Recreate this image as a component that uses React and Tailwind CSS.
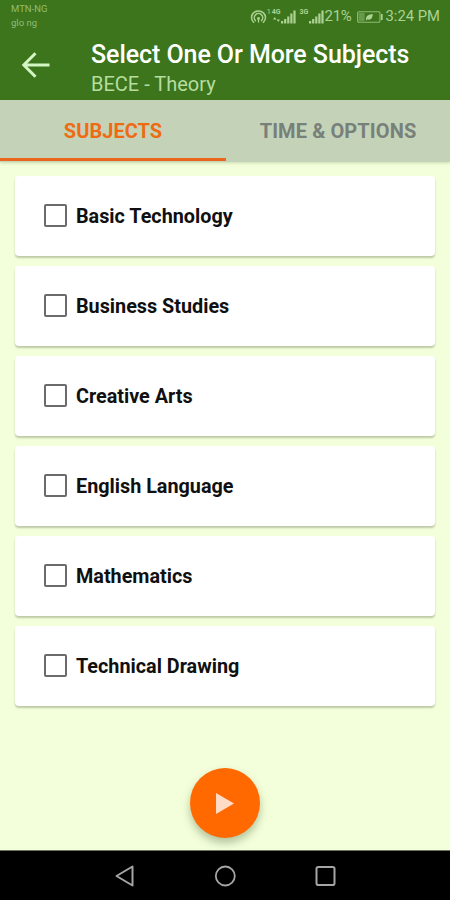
import React, { useState } from "react";

const subjects = [
  "Basic Technology",
  "Business Studies",
  "Creative Arts",
  "English Language",
  "Mathematics",
  "Technical Drawing",
];

const HotspotIcon = () => (
  <svg width="17" height="14" viewBox="0 0 17 14" fill="none" stroke="currentColor" strokeWidth="1.5" strokeLinecap="round">
    <path d="M3.6 12.2A7 6.6 0 1 1 13.4 12.2" />
    <path d="M5.4 10.6A4.2 4.2 0 1 1 11.6 10.6" />
    <circle cx="8.5" cy="8.5" r="1.4" fill="currentColor" stroke="none" />
    <path d="M8.5 9v3" strokeWidth="1.3" />
  </svg>
);

const SignalBars = () => (
  <svg width="15" height="14" viewBox="0 0 15 14" fill="currentColor">
    <rect x="0" y="11" width="2.2" height="2.5" />
    <rect x="3.1" y="9" width="2.2" height="4.5" />
    <rect x="6.2" y="6.5" width="2.2" height="7" />
    <rect x="9.3" y="3.5" width="2.2" height="10" />
    <rect x="12.4" y="0.5" width="2.2" height="13" />
  </svg>
);

const BatteryIcon = () => (
  <svg width="26" height="12" viewBox="0 0 26 12" fill="none">
    <rect x="0.6" y="0.8" width="22.4" height="10.4" rx="1.2" stroke="currentColor" strokeWidth="1.1" opacity="0.75" />
    <rect x="1.6" y="1.8" width="6" height="8.4" fill="currentColor" opacity="0.4" />
    <rect x="24" y="3" width="1.6" height="6" fill="currentColor" />
    <path d="M9 8.8C8.8 4.5 11.5 3.6 15.8 3C15.6 7.3 13.6 9.5 10.4 8.3L9.2 9.7Z" fill="currentColor" />
  </svg>
);

const App = () => {
  const [selected, setSelected] = useState([]);

  const toggle = (name) => {
    setSelected(selected.includes(name) ? selected.filter((s) => s !== name) : [...selected, name]);
  };

  return (
    <div className="w-[450px] h-[900px] flex flex-col overflow-hidden bg-[#f3ffda] font-['Roboto',sans-serif]">
      <header className="h-[100px] shrink-0 bg-[#3c751b] flex flex-col">
        <div className="h-[31px] flex justify-between text-[#abd293]">
          <div className="pl-[11px] pt-[2px] text-[9.5px] leading-[14px] text-[#91bd79]">
            <div>MTN-NG</div>
            <div>glo ng</div>
          </div>
          <div className="flex items-center pr-[10px] h-[33px]">
            <HotspotIcon />
            <span className="text-[8px] leading-none mb-[9px] w-[5px]">1</span>
            <div className="flex flex-col w-[9px] h-[15px] items-center text-[7px] leading-[7px] font-bold">
              <span>4G</span>
              <svg width="7" height="7" viewBox="0 0 7 7" fill="currentColor">
                <path d="M0 3.4L1.7 1L3.4 3.4ZM3.6 3.6H7L5.3 6Z" />
              </svg>
            </div>
            <SignalBars />
            <span className="text-[7px] leading-none font-bold mb-[9px] ml-[4px] w-[9px]">3G</span>
            <SignalBars />
            <span className="ml-[1px] text-[15px] w-[32px] tracking-[-0.3px]">21%</span>
            <BatteryIcon />
            <span className="ml-[3px] text-[14.8px] whitespace-nowrap">3:24 PM</span>
          </div>
        </div>
        <div className="flex">
          <button className="w-[91px] pl-[21px] pt-[1px] flex items-center text-[#d4f5c4]">
            <svg width="30" height="28" viewBox="0 0 30 28" fill="none" stroke="currentColor" strokeWidth="3">
              <path d="M28.5 14H3M14.5 2.2L2.8 14L14.5 25.8" />
            </svg>
          </button>
          <div className="pt-[7px]">
            <h1 className="text-[25px] leading-[33px] font-medium text-white whitespace-nowrap tracking-[-0.07px]">Select One Or More Subjects</h1>
            <p className="text-[20px] leading-[27px] text-[#b5dda0]">BECE - Theory</p>
          </div>
        </div>
      </header>

      <nav className="h-[62px] shrink-0 flex bg-[#c4d3b8] text-[20px] font-bold shadow-[0_1px_3px_rgba(80,100,50,0.25)]">
        <button className="w-[226px] border-b-[3px] border-[#eb661b] mb-px pt-[4px] text-[#ee6b13] tracking-[0.05px]">SUBJECTS</button>
        <button className="w-[224px] text-[#78807a] tracking-[0.1px]">TIME &amp; OPTIONS</button>
      </nav>

      <main className="flex-1 flex flex-col items-center px-[15px] pt-[14px]">
        <ul className="w-full flex flex-col gap-[10px]">
          {subjects.map((name) => (
            <li key={name} className="h-[80px] bg-white rounded-[4px] shadow-[0_2px_2px_rgba(70,80,50,0.3)]">
              <label className="h-full flex items-center pl-[29px] text-[19.8px] font-bold text-[#101010]">
                <input
                  type="checkbox"
                  checked={selected.includes(name)}
                  onChange={() => toggle(name)}
                  className="appearance-none w-[23px] h-[23px] border-2 border-[#6c6a6d] rounded-[2px] mr-[9px] mb-[2px] checked:bg-[#ff6600]"
                />
                <span className="pt-[1px]">{name}</span>
              </label>
            </li>
          ))}
        </ul>
        <button className="mt-[62px] w-[70px] h-[70px] rounded-full bg-[#ff6900] flex items-center justify-center shadow-[0_5px_8px_rgba(60,80,40,0.35)]">
          <svg width="18" height="21" viewBox="0 0 18 21" className="text-[#ffdcc6]" fill="currentColor">
            <path d="M0 0L18 10.5L0 21Z" />
          </svg>
        </button>
      </main>

      <footer className="h-[50px] shrink-0 bg-black border-t border-[#6d745f] flex items-center justify-center gap-[78px] text-[#a5a5a5]">
        <svg width="22" height="22" viewBox="0 0 22 22" fill="none" stroke="currentColor" strokeWidth="2" strokeLinejoin="round">
          <path d="M18.5 1.5V20.5L2.5 11Z" />
        </svg>
        <svg width="22" height="22" viewBox="0 0 22 22" fill="none" stroke="currentColor" strokeWidth="1.8">
          <circle cx="11.3" cy="11" r="9.5" />
        </svg>
        <svg width="22" height="22" viewBox="0 0 22 22" fill="none" stroke="currentColor" strokeWidth="2">
          <rect x="2.5" y="2" width="18" height="18" rx="1.8" />
        </svg>
      </footer>
    </div>
  );
};

export default App;
